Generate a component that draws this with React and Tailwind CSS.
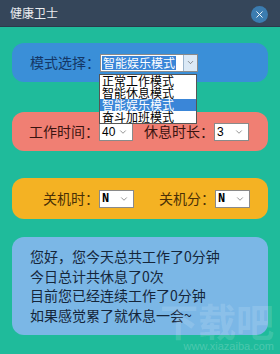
import { X, ChevronDown } from "lucide-react";

const serif = { fontFamily: '"Noto Sans CJK SC", sans-serif' };

// 简易下拉框
function FakeSelect({ value, width, mono }) {
  return (
    <div className={`flex items-center h-[18px] bg-white border border-[#8a8a8a] ${width}`}>
      <span className={`flex-1 pl-[2px] text-[12px] leading-none text-black ${mono ? "font-bold" : ""}`} style={{ fontFamily: mono ? '"Liberation Mono", monospace' : '"Liberation Sans", sans-serif' }}>
        {value}
      </span>
      <ChevronDown className="w-[10px] h-[10px] mr-[4px] text-[#555]" strokeWidth={1.5} />
    </div>
  );
}

export default function App() {
  const modes = ["正常工作模式", "智能休息模式", "智能娱乐模式", "奋斗加班模式"];

  return (
    <div className="w-[280px] h-[354px] bg-[#1fbb9b] relative overflow-hidden" style={{ fontFamily: '"Noto Sans CJK SC", sans-serif' }}>
      {/* 标题栏 */}
      <div className="h-[27px] bg-[#35465a] border-b border-[#2c3a4b] flex items-center justify-between pl-[10px] pr-[12px]">
        <span className="text-[12px] text-white/90 leading-none">健康卫士</span>
        <div className="w-[17px] h-[17px] rounded-full bg-[#3b7cb0] flex items-center justify-center mt-[3px]">
          <X className="w-[11px] h-[11px] text-white" strokeWidth={2} />
        </div>
      </div>

      <div className="flex flex-col px-[12px] pt-[16px]">
        {/* 模式选择 */}
        <div className="relative h-[39px] rounded-[12px] bg-[#3a8fd8] flex items-center pl-[18px]">
          <span className="text-[14px] text-[#143766]" style={serif}>模式选择：</span>
          <div className="flex items-center h-[18px] w-[98px] bg-white border border-[#8a8a8a]">
            <span className="flex-1 ml-[1px] h-[14px] flex items-center">
              <span className="bg-[#3a86d8] text-white text-[12px] leading-[14px] px-[1px]">智能娱乐模式</span>
            </span>
            <div className="w-[14px] h-[16px] bg-[#dbe9f6] border-l border-[#9ab4cc] flex items-center justify-center">
              <ChevronDown className="w-[9px] h-[9px] text-[#444]" strokeWidth={1.5} />
            </div>
          </div>
          {/* 下拉列表 */}
          <div className="absolute left-[87px] top-[31px] w-[98px] bg-white border border-[#555] z-10 flex flex-col">
            {modes.map((m, i) => (
              <div key={i} className={`h-[12px] flex items-center pl-[2px] text-[12px] leading-[12px] ${i === 2 ? "bg-[#3a86d8] text-white" : "text-black"}`}>
                {m}
              </div>
            ))}
          </div>
        </div>

        {/* 工作时间 */}
        <div className="mt-[30px] h-[39px] rounded-[12px] bg-[#f07f73] flex items-center pl-[17px]">
          <span className="text-[14px] text-[#3a1410]" style={serif}>工作时间：</span>
          <FakeSelect value="40" width="w-[34px]" />
          <span className="ml-[11px] text-[14px] text-[#3a1410]" style={serif}>休息时长：</span>
          <FakeSelect value="3" width="w-[35px]" />
        </div>

        {/* 关机 */}
        <div className="mt-[27px] h-[41px] rounded-[12px] bg-[#f4b223] flex items-center pl-[31px]">
          <span className="text-[14px] text-[#4a3006]" style={serif}>关机时：</span>
          <FakeSelect value="N" width="w-[35px]" mono />
          <span className="ml-[25px] text-[14px] text-[#4a3006]" style={serif}>关机分：</span>
          <FakeSelect value="N" width="w-[35px]" mono />
        </div>

        {/* 统计信息 */}
        <div className="mt-[18px] h-[98px] rounded-[12px] bg-[#7bb7e6] flex flex-col justify-center pl-[18px] text-[14px] leading-[19.5px] text-[#15263a]">
          <p>您好，您今天总共工作了0分钟</p>
          <p>今日总计共休息了0次</p>
          <p>目前您已经连续工作了0分钟</p>
          <p>如果感觉累了就休息一会~</p>
        </div>
      </div>

      {/* 水印 */}
      <div className="absolute right-[6px] bottom-[2px] flex flex-col items-end gap-[2px] pointer-events-none">
        <span className="text-[38px] leading-[38px] font-bold text-white/15">下载吧</span>
        <span className="text-[11px] leading-[11px] text-white/20" style={{ fontFamily: '"Liberation Sans", sans-serif' }}>www.xiazaiba.com</span>
      </div>
    </div>
  );
}
